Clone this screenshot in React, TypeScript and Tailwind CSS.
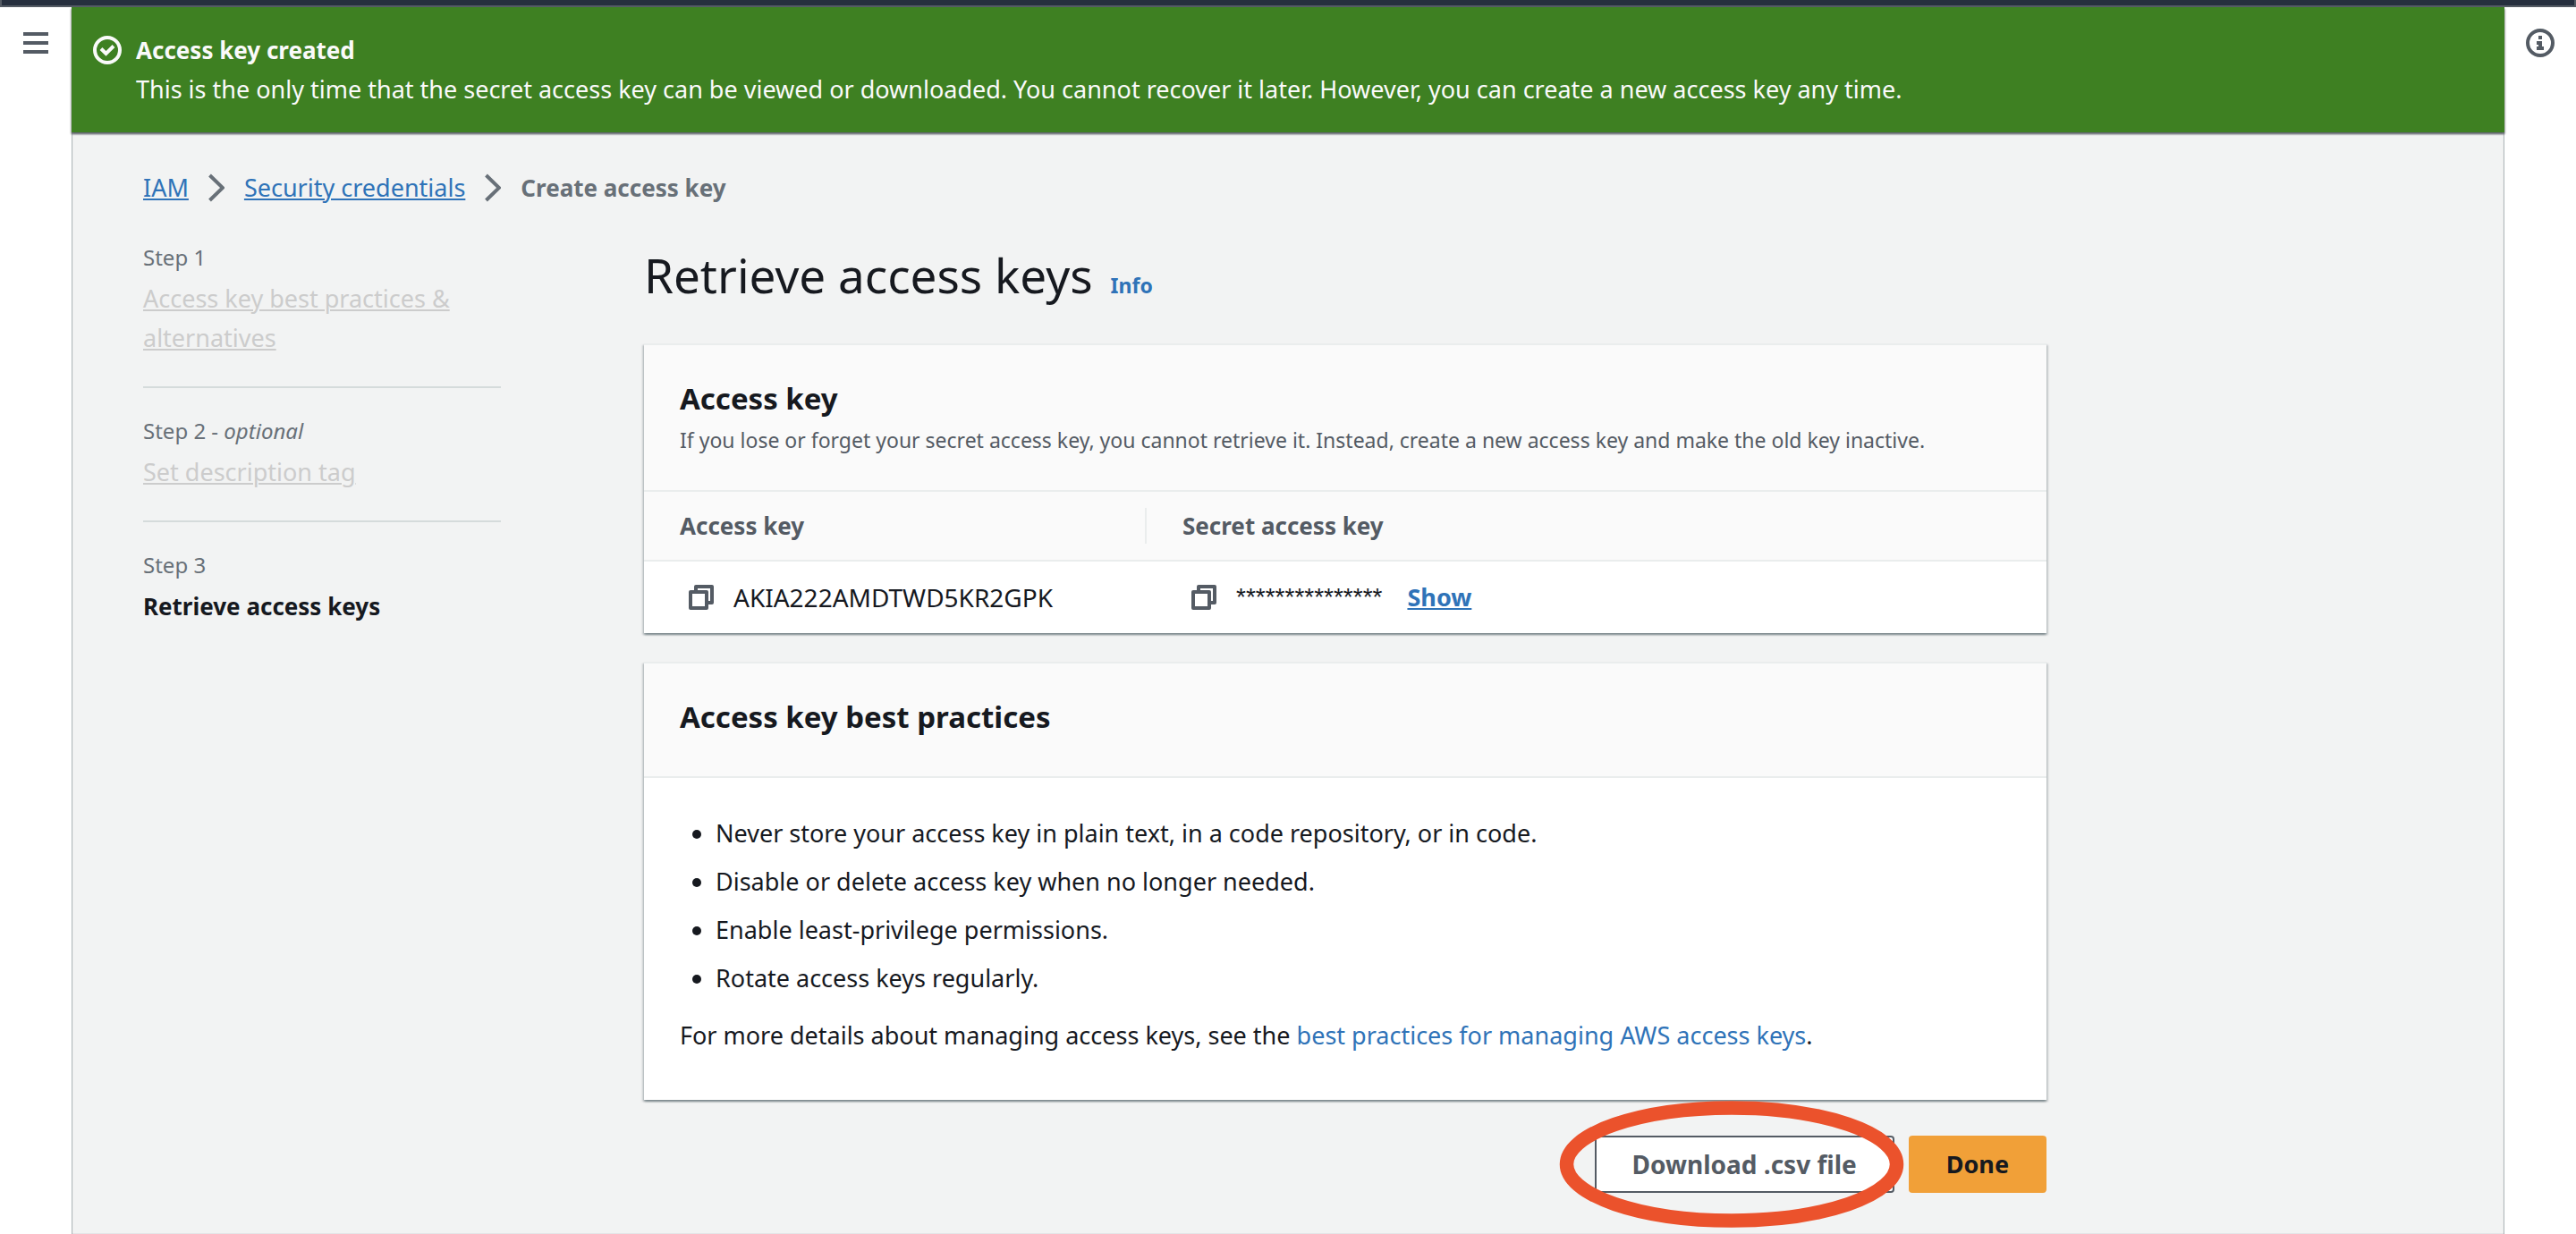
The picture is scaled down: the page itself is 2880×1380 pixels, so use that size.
import type { ReactNode } from 'react'

const practices = [
  'Never store your access key in plain text, in a code repository, or in code.',
  'Disable or delete access key when no longer needed.',
  'Enable least-privilege permissions.',
  'Rotate access keys regularly.',
]

function MenuIcon() {
  return (
    <svg width="28" height="24" viewBox="0 0 28 24" fill="currentColor" aria-hidden="true">
      <path d="M0 0h28v4H0zM0 10h28v4H0zM0 20h28v4H0z" />
    </svg>
  )
}

function InfoIcon() {
  return (
    <svg width="32" height="32" viewBox="0 0 32 32" aria-hidden="true">
      <circle cx="16" cy="16" r="14" fill="none" stroke="currentColor" strokeWidth="4" />
      <path d="M14 8h4v4h-4zM12 14h6v6h2v4h-8v-4h2v-2h-2z" fill="currentColor" />
    </svg>
  )
}

function SuccessIcon() {
  return (
    <svg width="32" height="32" viewBox="0 0 32 32" fill="none" stroke="currentColor" strokeWidth="4" className="mt-1.5 shrink-0" aria-hidden="true">
      <circle cx="16" cy="16" r="14" />
      <path d="M9 14.5l5.5 5.5 8.5-8.5" />
    </svg>
  )
}

function Chevron() {
  return (
    <svg width="18" height="32" viewBox="0 0 18 32" fill="none" stroke="#687078" strokeWidth="4" className="shrink-0" aria-hidden="true">
      <path d="M1.5 2L16 16 1.5 30" />
    </svg>
  )
}

function CopyButton({ label }: { label: string }) {
  return (
    <button type="button" aria-label={label} className="flex h-11 w-12 items-center justify-center text-[#545b64]">
      <svg width="28" height="28" viewBox="0 0 28 28" fill="none" stroke="currentColor" strokeWidth="4" strokeLinejoin="round" aria-hidden="true">
        <path d="M2 8h18v18H2z" />
        <path d="M8 6V2h18v18h-4" />
      </svg>
    </button>
  )
}

function Card({ children }: { children: ReactNode }) {
  return (
    <section className="border-t-2 border-[#eaeded] bg-white shadow-[0_2px_2px_0_rgba(0,28,36,0.3),2px_2px_2px_0_rgba(0,28,36,0.15),-2px_2px_2px_0_rgba(0,28,36,0.15)]">
      {children}
    </section>
  )
}

function Step({ label, optional, children }: { label: string; optional?: boolean; children: ReactNode }) {
  return (
    <li className="border-b-2 border-[#d5dbdb] pt-7 pb-8 first:pt-0 last:border-b-0">
      <p className="mb-1 text-[24px] leading-10 text-[#687078]">
        {label}
        {optional && <> - <i>optional</i></>}
      </p>
      {children}
    </li>
  )
}

export default function App() {
  return (
    <div className="flex min-h-screen flex-col bg-white font-['Noto_Sans','Open_Sans',sans-serif] text-[27px] leading-[44px] text-[#16191f]">
      <div className="h-2 border-x-2 border-b-2 border-[#545b64] bg-[#262f3e]" />
      <div className="flex flex-1">
        <nav className="flex w-20 shrink-0 justify-center pt-7 text-[#545b64]">
          <button type="button" aria-label="Open navigation" className="h-6">
            <MenuIcon />
          </button>
        </nav>

        <div className="min-w-0 flex-1 bg-[#f2f3f3] shadow-[inset_1px_0_1px_0_rgba(0,28,36,0.3),inset_-1px_0_1px_0_rgba(0,28,36,0.3)]">
          <div role="status" className="flex gap-4 bg-[#3e8022] px-6 py-[26px] text-[#fafafa] shadow-[0_2px_2px_0_rgba(0,7,22,0.4),1px_2px_2px_0_rgba(0,7,22,0.2),-1px_2px_2px_0_rgba(0,7,22,0.2)]">
            <SuccessIcon />
            <div>
              <p className="text-[26px] font-bold">Access key created</p>
              <p>
                This is the only time that the secret access key can be viewed or downloaded. You cannot recover it later. However, you can create a new access key any time.
              </p>
            </div>
          </div>

          <div className="px-20 pt-10">
            <nav aria-label="Breadcrumb">
              <ol className="flex items-center gap-[22px]">
                <li><a href="#iam" className="text-[#2f73b8] underline decoration-2 underline-offset-2">IAM</a></li>
                <li className="flex items-center gap-[22px]">
                  <Chevron />
                  <a href="#security" className="text-[#2f73b8] underline decoration-2 underline-offset-2">Security credentials</a>
                </li>
                <li className="flex items-center gap-[22px] text-[26px] font-bold text-[#687078]">
                  <Chevron />
                  <span>Create access key</span>
                </li>
              </ol>
            </nav>

            <div className="flex gap-40 pt-9">
              <ol className="w-[400px] shrink-0">
                <Step label="Step 1">
                  <a href="#step-1" className="block w-[360px] text-[#cccccc] underline decoration-2 underline-offset-2">
                    Access key best practices &amp; alternatives
                  </a>
                </Step>
                <Step label="Step 2" optional>
                  <a href="#step-2" className="block text-[#cccccc] underline decoration-2 underline-offset-2">Set description tag</a>
                </Step>
                <Step label="Step 3">
                  <p className="text-[26px] font-bold">Retrieve access keys</p>
                </Step>
              </ol>

              <main className="max-w-[1568px] min-w-0 flex-1">
                <div className="flex items-baseline gap-5 pt-1">
                  <h1 className="text-[53px] leading-[72px]">Retrieve access keys</h1>
                  <a href="#info" className="text-[23px] leading-10 font-bold text-[#2f73b8]">Info</a>
                </div>

                <div className="mt-10 flex flex-col gap-8">
                  <Card>
                    <div className="border-b-2 border-[#eaeded] bg-[#fafafa] px-10 pt-[38px] pb-9">
                      <h2 className="mb-1 text-[33px] font-bold">Access key</h2>
                      <p className="text-[23px] leading-10 text-[#545b64]">
                        If you lose or forget your secret access key, you cannot retrieve it. Instead, create a new access key and make the old key inactive.
                      </p>
                    </div>
                    <table className="w-full table-fixed text-left">
                      <colgroup>
                        <col className="w-[562px]" />
                        <col />
                      </colgroup>
                      <thead>
                        <tr className="border-b-2 border-[#eaeded] bg-[#fafafa] text-[26px] text-[#545b64]">
                          <th scope="col" className="py-4 pl-10 font-bold">
                            <div className="flex items-center justify-between">
                              Access key
                              <span className="h-10 w-0.5 bg-[#eaeded]" />
                            </div>
                          </th>
                          <th scope="col" className="px-10 py-4 font-bold">Secret access key</th>
                        </tr>
                      </thead>
                      <tbody>
                        <tr>
                          <td className="py-[18px] pl-10">
                            <div className="flex items-center gap-3 text-[28px]">
                              <CopyButton label="Copy access key" />
                              AKIA222AMDTWD5KR2GPK
                            </div>
                          </td>
                          <td className="px-10 py-[18px]">
                            <div className="flex items-center gap-3">
                              <CopyButton label="Copy secret access key" />
                              <span className="font-['Liberation_Sans',sans-serif] text-[28px]">***************</span>
                              <button type="button" className="ml-4 font-bold text-[#2f73b8] underline decoration-2 underline-offset-2">Show</button>
                            </div>
                          </td>
                        </tr>
                      </tbody>
                    </table>
                  </Card>

                  <Card>
                    <div className="border-b-2 border-[#eaeded] bg-[#fafafa] px-10 pt-[38px] pb-11">
                      <h2 className="text-[33px] font-bold">Access key best practices</h2>
                    </div>
                    <div className="px-10 pt-10 pb-[50px]">
                      <ul className="flex list-disc flex-col gap-2.5 pl-10">
                        {practices.map((text) => (
                          <li key={text}>{text}</li>
                        ))}
                      </ul>
                      <p className="mt-5">
                        For more details about managing access keys, see the{' '}
                        <a href="#best-practices" className="text-[#2f73b8]">best practices for managing AWS access keys</a>.
                      </p>
                    </div>
                  </Card>
                </div>

                <div className="flex justify-end gap-4 pt-10 pb-11">
                  <div className="relative">
                    <button type="button" className="h-16 rounded-sm border-2 border-[#545b64] bg-white px-10 text-[28px] font-bold text-[#545b64]">
                      Download .csv file
                    </button>
                    <svg width="388" height="144" viewBox="0 0 388 144" fill="none" className="pointer-events-none absolute -top-10 -left-10 max-w-none" aria-hidden="true">
                      <ellipse cx="193" cy="72" rx="184.5" ry="63" stroke="#eb522c" strokeWidth="15.5" />
                    </svg>
                  </div>
                  <button type="button" className="h-16 rounded-sm bg-[#f1a038] px-[42px] font-bold">Done</button>
                </div>
              </main>
            </div>
          </div>
        </div>

        <aside className="flex w-20 shrink-0 justify-center pt-6 text-[#545b64]">
          <button type="button" aria-label="Open help panel" className="h-8">
            <InfoIcon />
          </button>
        </aside>
      </div>
    </div>
  )
}
